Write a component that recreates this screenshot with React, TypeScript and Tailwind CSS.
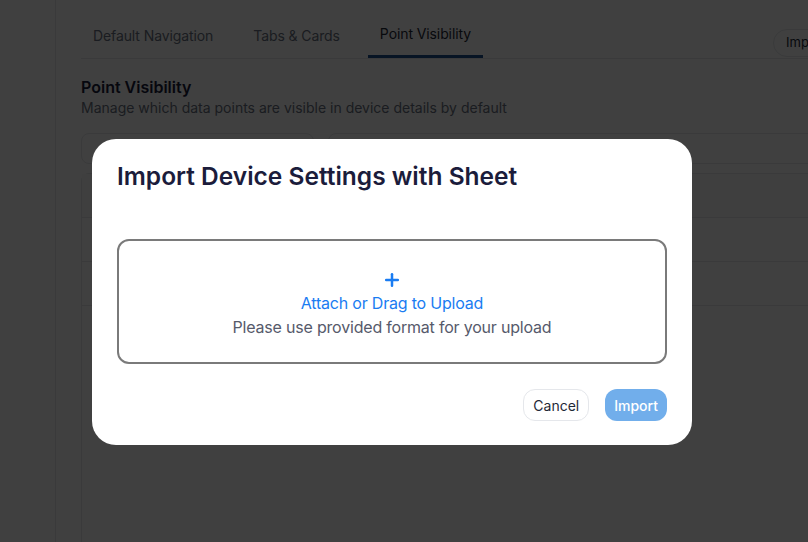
import { Plus, Upload } from 'lucide-react'

const tabs = ['Default Navigation', 'Tabs & Cards', 'Point Visibility']

function Background() {
  return (
    <div className="flex h-full">
      <div className="w-[56px] shrink-0 border-r border-gray-200 bg-white" />
      <div className="w-[803px] shrink-0 pl-[25px]">
        <div className="flex items-end justify-between border-b border-gray-200 pt-[23px]">
          <div className="flex gap-4 tracking-[-0.1px]">
            {tabs.map((t, i) => (
              <div
                key={t}
                className={
                  i === 2
                    ? 'border-b-[3px] border-[#1d4f91] px-3 pb-[11px] text-[14px] text-[#1f2937]'
                    : 'border-b-[3px] border-transparent px-3 pb-[9px] pt-[2px] text-[14px] text-gray-500'
                }
              >
                {t}
              </div>
            ))}
          </div>
          <button className="mb-[1px] flex h-[28px] items-center gap-1.5 rounded-full border border-gray-200 px-3 text-[13px] text-gray-800">
            Import
            <Upload className="h-3.5 w-3.5" />
          </button>
        </div>
        <div className="pt-[18px]">
          <div className="text-[16px] font-semibold leading-[20px] text-[#1b1c3b]">
            Point Visibility
          </div>
          <div className="mt-[1px] text-[14px] leading-[20px] text-gray-500">
            Manage which data points are visible in device details by default
          </div>
        </div>
        <div className="mt-[15px] flex gap-[14px]">
          <div className="h-[31px] w-[233px] rounded-lg border border-gray-200" />
          <div className="h-[31px] flex-1 rounded-lg border border-gray-200" />
        </div>
        <div className="mt-[9px] h-[400px] rounded-t-lg border border-gray-200">
          <div className="h-[44px] border-b border-gray-200 bg-gray-50" />
          <div className="h-[44px] border-b border-gray-200" />
          <div className="h-[44px] border-b border-gray-200" />
        </div>
      </div>
    </div>
  )
}

export default function App() {
  return (
    <div
      className="relative h-[542px] w-[808px] overflow-hidden bg-white"
      style={{ fontFamily: 'Inter, "Noto Sans", sans-serif' }}
    >
      <Background />
      <div className="absolute inset-0 bg-black/75">
        <div className="ml-[92px] mt-[139px] w-[600px] rounded-[24px] bg-white px-[25px] pb-[24px] pt-[22px]">
          <h2 className="text-[24.5px] font-semibold leading-[30px] text-[#1b1c3b]">
            Import Device Settings with Sheet
          </h2>
          <div className="mt-[48px] flex h-[125px] flex-col items-center justify-center rounded-xl border-2 border-[#7a7a7a] pt-[4px]">
            <Plus className="h-[20px] w-[20px] text-[#1a7cf2]" strokeWidth={3} />
            <div className="mt-[2px] text-[16px] leading-[22px] tracking-[-0.2px] text-[#1a7cf2]">
              Attach or Drag to Upload
            </div>
            <div className="mt-[2px] text-[16px] leading-[22px] tracking-[-0.2px] text-[#565a6b]">
              Please use provided format for your upload
            </div>
          </div>
          <div className="mt-[25px] flex justify-end gap-4">
            <button className="h-[32px] rounded-xl border border-gray-200 px-[9px] text-[14px] text-[#1f2937]">
              Cancel
            </button>
            <button className="h-[32px] rounded-xl bg-[#71aeeb] px-[9px] text-[14px] font-medium text-white">
              Import
            </button>
          </div>
        </div>
      </div>
    </div>
  )
}
